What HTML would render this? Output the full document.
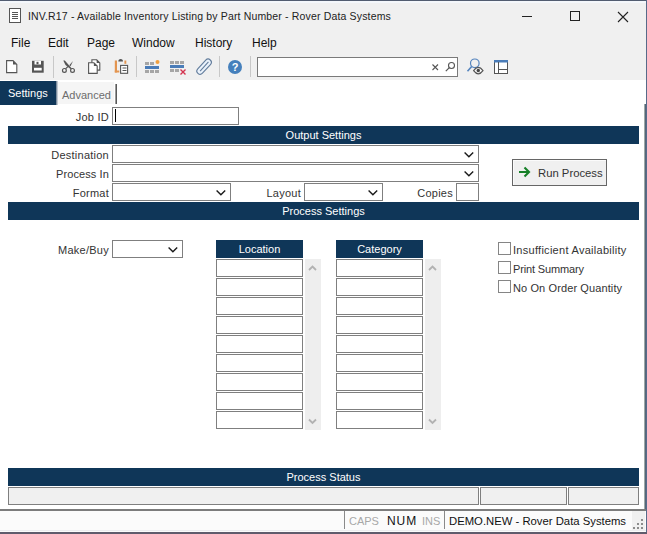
<!DOCTYPE html>
<html><head><meta charset="utf-8">
<style>
html,body{margin:0;padding:0;}
body{width:647px;height:534px;position:relative;overflow:hidden;background:#fff;font-family:"Liberation Sans",sans-serif;color:#333;}
.a{position:absolute;}
.t{position:absolute;white-space:nowrap;font-size:11px;line-height:13px;}
.r{text-align:right;letter-spacing:0.25px;}
.hdr{position:absolute;left:8px;width:631px;height:18px;background:#0f3658;color:#fff;text-align:center;font-size:11px;line-height:18px;}
.box{position:absolute;box-sizing:border-box;border:1px solid #7f7f7f;background:#fff;height:18px;}
.chev{position:absolute;}
.cell{position:absolute;box-sizing:border-box;border:1px solid #7f7f7f;background:#fff;width:87px;height:18px;}
.cb{position:absolute;box-sizing:border-box;width:13px;height:13px;border:1px solid #858585;background:#fff;}
.sb{position:absolute;box-sizing:border-box;border:1px solid #7f7f7f;background:#f0f0f0;height:18px;top:487px;}
</style></head><body>
<!-- chrome background -->
<div class="a" style="left:0;top:0;width:647px;height:80px;background:#f0f0f0;"></div>
<div class="a" style="left:0;top:1px;width:646px;height:2px;background:#f4f7fb;"></div><div class="a" style="left:0;top:0;width:647px;height:1px;background:#525c70;"></div>
<div class="a" style="left:646px;top:0;width:1px;height:534px;background:#576a89;"></div>

<!-- title -->
<svg class="a" style="left:9px;top:8px" width="13" height="15" viewBox="0 0 13 15">
<rect x="0.5" y="0.5" width="11" height="14" fill="#fff" stroke="#555"/>
<path d="M3 4.5h6M3 6.5h6M3 8.5h6M3 10.5h6" stroke="#555" stroke-width="1"/>
</svg>
<div class="t" style="left:28px;top:10px;font-size:10.5px;letter-spacing:0.16px;color:#222;">INV.R17 - Available Inventory Listing by Part Number - Rover Data Systems</div>
<div class="a" style="left:522px;top:16px;width:10px;height:1px;background:#222;"></div>
<div class="a" style="left:570px;top:11px;width:10px;height:10px;box-sizing:border-box;border:1px solid #222;"></div>
<svg class="a" style="left:617px;top:11px" width="12" height="12" viewBox="0 0 12 12"><path d="M1 1L11 11M11 1L1 11" stroke="#222" stroke-width="1.1"/></svg>

<!-- menu -->
<div class="t" style="left:11px;top:37px;font-size:12px;color:#111;">File</div>
<div class="t" style="left:48px;top:37px;font-size:12px;color:#111;">Edit</div>
<div class="t" style="left:87px;top:37px;font-size:12px;color:#111;">Page</div>
<div class="t" style="left:132px;top:37px;font-size:12px;color:#111;">Window</div>
<div class="t" style="left:195px;top:37px;font-size:12px;color:#111;">History</div>
<div class="t" style="left:252px;top:37px;font-size:12px;color:#111;">Help</div>

<!-- toolbar -->
<svg class="a" style="left:0;top:54px" width="520" height="26" viewBox="0 54 520 26">
<!-- new -->
<path d="M6.6 60.6h6.4l3.8 3.8v8.2h-10.2z" fill="#fff" stroke="#555" stroke-width="1.1"/>
<path d="M13 60.6l3.8 3.8h-3.8z" fill="#555"/>
<!-- save -->
<path d="M32 60.8h11.7v11.9h-11.7z" fill="#555"/>
<rect x="34.5" y="60.8" width="6.5" height="3.7" fill="#fff"/>
<rect x="36.5" y="61.8" width="2" height="2.4" fill="#555"/>
<rect x="34" y="67.8" width="7.7" height="2.7" fill="#fff"/>
<!-- sep -->
<rect x="53" y="56" width="1" height="22" fill="#c8c8c8"/>
<!-- cut -->
<circle cx="64.4" cy="70.4" r="1.9" fill="none" stroke="#555" stroke-width="1.2"/>
<circle cx="72.5" cy="70.4" r="1.9" fill="none" stroke="#555" stroke-width="1.2"/>
<path d="M63.3 60.6L64.8 60.4L71.8 68.6L70.8 69.2L65.5 65z" fill="#555"/>
<path d="M73 61L70.5 66.2L69.3 65.2z" fill="#555"/>
<path d="M65.5 68.8L68 66.5" stroke="#555" stroke-width="1.1"/>
<!-- copy -->
<path d="M91.9 59.8h4.8l3.1 3.1v7.2h-7.9z" fill="#fff" stroke="#555" stroke-width="1.1"/>
<path d="M96.7 59.8l3.1 3.1h-3.1z" fill="#555"/>
<path d="M88.6 62.8h5.3l3.3 3.3v7.3h-8.6z" fill="#fff" stroke="#555" stroke-width="1.1"/>
<path d="M93.9 62.8l3.3 3.3h-3.3z" fill="#555"/>
<!-- paste -->
<rect x="114.8" y="60.5" width="2.2" height="12" fill="#e39550"/>
<rect x="114.8" y="70.5" width="4.5" height="2" fill="#e39550"/>
<rect x="124.4" y="60.5" width="1.9" height="3.3" fill="#e39550"/>
<path d="M118.3 61.6q0-2.6 2.35-2.6q2.35 0 2.35 2.6z" fill="#555"/>
<rect x="120.6" y="65.4" width="7" height="7.9" fill="#fff" stroke="#555" stroke-width="1.1"/>
<path d="M122.5 68h4M122.5 70.5h4" stroke="#555" stroke-width="1"/>
<!-- sep -->
<rect x="136" y="56" width="1" height="21" fill="#c8c8c8"/>
<!-- insert row -->
<rect x="145" y="62" width="4" height="3" fill="#a6a6a6"/>
<rect x="150" y="62" width="4" height="3" fill="#a6a6a6"/>
<circle cx="157.5" cy="62" r="2" fill="#f0a040"/>
<rect x="145" y="66" width="14" height="3" fill="#4a7cb8"/>
<rect x="145" y="70" width="4" height="3" fill="#a6a6a6"/>
<rect x="150" y="70" width="4" height="3" fill="#a6a6a6"/>
<rect x="155" y="70" width="4" height="3" fill="#a6a6a6"/>
<!-- delete row -->
<rect x="170" y="61" width="4" height="3" fill="#a6a6a6"/>
<rect x="175" y="61" width="4" height="3" fill="#a6a6a6"/>
<rect x="180" y="61" width="4" height="3" fill="#a6a6a6"/>
<rect x="170" y="65" width="14" height="3" fill="#4a7cb8"/>
<rect x="170" y="69" width="4" height="3" fill="#a6a6a6"/>
<rect x="175" y="69" width="4" height="3" fill="#a6a6a6"/>
<path d="M180.5 69.5l5 5M185.5 69.5l-5 5" stroke="#d3324e" stroke-width="1.4"/>
<!-- paperclip -->
<g transform="rotate(-47.4 204.1 66.7)">
<rect x="195" y="63.5" width="18.2" height="6.4" rx="3.2" fill="#eaf2fb" stroke="#637d9c" stroke-width="1.15"/>
<path d="M198.2 66.7h12.3" stroke="#637d9c" stroke-width="1.1"/>
</g>
<!-- sep -->
<rect x="219" y="56" width="1" height="21" fill="#c8c8c8"/>
<!-- help -->
<circle cx="235" cy="67" r="7" fill="#4580bc"/>
<text x="235" y="71" font-family="Liberation Sans" font-weight="bold" font-size="11" fill="#fff" text-anchor="middle">?</text>
<!-- sep -->
<rect x="250" y="56" width="1" height="21" fill="#c8c8c8"/>
<!-- search box -->
<rect x="257.5" y="57.5" width="200" height="19" fill="#fff" stroke="#7a7a7a"/>
<path d="M432.5 64.5l5.5 5.5M438 64.5l-5.5 5.5" stroke="#555" stroke-width="1.1"/>
<circle cx="451.5" cy="65.5" r="3" fill="none" stroke="#555" stroke-width="1.1"/>
<path d="M449.3 67.7l-3.5 3.5" stroke="#555" stroke-width="1.2"/>
<!-- search eye -->
<circle cx="474.8" cy="63.3" r="4.3" fill="none" stroke="#5484be" stroke-width="1.2"/>
<path d="M471.7 66.5l-4.2 4.7" stroke="#5484be" stroke-width="1.6"/>
<path d="M473.6 70.6q4.7-6.4 9.4 0q-4.7 6.4-9.4 0z" fill="#f8f8f8" stroke="#555" stroke-width="1.15"/>
<circle cx="478.3" cy="70.5" r="1.7" fill="#444"/>
<!-- layout -->
<rect x="494.5" y="60.5" width="13" height="13" fill="#fff" stroke="#555"/>
<rect x="494" y="60" width="14" height="2.5" fill="#4a7cb8"/>
<path d="M498.5 62v11.5M498.5 69.5h9" stroke="#555"/>
</svg>

<!-- tabs -->
<div class="a" style="left:0;top:81px;width:56px;height:24px;background:#0f3658;"></div>
<div class="a" style="left:56px;top:81px;width:1px;height:24px;background:#7f8e9e;"></div><div class="a" style="left:57px;top:81px;width:1px;height:24px;background:#c0c8d0;"></div>
<div class="t" style="left:8px;top:87px;color:#fff;font-size:11px;">Settings</div>
<div class="a" style="left:58px;top:82px;width:56px;height:22px;background:#f5f5f5;"></div>
<div class="a" style="left:115px;top:84px;width:1px;height:20px;background:#9a9a9a;"></div><div class="a" style="left:116px;top:84px;width:1px;height:20px;background:#5a5a5a;"></div>
<div class="t" style="left:62px;top:89px;color:#6d6d6d;font-size:11px;">Advanced</div>

<!-- job id -->
<div class="t r" style="left:60px;width:49px;top:111px;">Job ID</div>
<div class="box" style="left:112px;top:107px;width:127px;"></div>
<div class="a" style="left:115px;top:109px;width:1px;height:13px;background:#000;"></div>

<div class="hdr" style="top:126px;">Output Settings</div>

<div class="t r" style="left:20px;width:89px;top:149px;">Destination</div>
<div class="box" style="left:112px;top:145px;width:367px;"></div>
<div class="t r" style="left:20px;width:89px;top:168px;letter-spacing:0.1px;">Process In</div>
<div class="box" style="left:112px;top:164px;width:367px;"></div>
<div class="t r" style="left:20px;width:89px;top:187px;">Format</div>
<div class="box" style="left:112px;top:183px;width:119px;"></div>
<div class="t r" style="left:240px;width:61px;top:187px;">Layout</div>
<div class="box" style="left:304px;top:183px;width:79px;"></div>
<div class="t r" style="left:390px;width:63px;top:187px;">Copies</div>
<div class="box" style="left:456px;top:183px;width:23px;"></div>

<svg class="chev" style="left:464px;top:151px" width="10" height="7"><path d="M0.6 1.5l4.3 4.3 4.3-4.3" fill="none" stroke="#1a1a1a" stroke-width="1.4"/></svg>
<svg class="chev" style="left:464px;top:170px" width="10" height="7"><path d="M0.6 1.5l4.3 4.3 4.3-4.3" fill="none" stroke="#1a1a1a" stroke-width="1.4"/></svg>
<svg class="chev" style="left:216px;top:189px" width="10" height="7"><path d="M0.6 1.5l4.3 4.3 4.3-4.3" fill="none" stroke="#1a1a1a" stroke-width="1.4"/></svg>
<svg class="chev" style="left:368px;top:189px" width="10" height="7"><path d="M0.6 1.5l4.3 4.3 4.3-4.3" fill="none" stroke="#1a1a1a" stroke-width="1.4"/></svg>

<!-- run process -->
<div class="a" style="left:512px;top:159px;width:95px;height:27px;box-sizing:border-box;border:1px solid #666;background:#f0f0f0;box-shadow:inset 1px 1px #fbfbfb;"></div>
<svg class="a" style="left:518px;top:166px" width="14" height="12"><path d="M1 6h10M6.5 1.5l4.5 4.5-4.5 4.5" fill="none" stroke="#178028" stroke-width="2.1"/></svg>
<div class="t" style="left:538px;top:167px;font-size:11.3px;color:#333;">Run Process</div>

<div class="hdr" style="top:202px;">Process Settings</div>

<!-- make/buy -->
<div class="t r" style="left:40px;width:69px;top:244px;">Make/Buy</div>
<div class="box" style="left:112px;top:240px;width:71px;"></div>
<svg class="chev" style="left:168px;top:246px" width="10" height="7"><path d="M0.6 1.5l4.3 4.3 4.3-4.3" fill="none" stroke="#1a1a1a" stroke-width="1.4"/></svg>

<!-- location grid -->
<div class="a" style="left:216px;top:240px;width:87px;height:18px;background:#0f3658;color:#fff;text-align:center;font-size:11px;line-height:18px;">Location</div>
<div class="a" style="left:305px;top:259px;width:16px;height:171px;background:#eeeeee;"></div>
<svg class="a" style="left:308px;top:264px" width="9" height="7"><path d="M1 6l3.5-3.5 3.5 3.5" fill="none" stroke="#b2b2b2" stroke-width="1.8"/></svg>
<svg class="a" style="left:308px;top:417.5px" width="9" height="7"><path d="M1 1.5l3.5 3.5 3.5-3.5" fill="none" stroke="#b2b2b2" stroke-width="1.8"/></svg>
<div class="cell" style="left:216px;top:259px;"></div>
<div class="cell" style="left:216px;top:278px;"></div>
<div class="cell" style="left:216px;top:297px;"></div>
<div class="cell" style="left:216px;top:316px;"></div>
<div class="cell" style="left:216px;top:335px;"></div>
<div class="cell" style="left:216px;top:354px;"></div>
<div class="cell" style="left:216px;top:373px;"></div>
<div class="cell" style="left:216px;top:392px;"></div>
<div class="cell" style="left:216px;top:411px;"></div>

<!-- category grid -->
<div class="a" style="left:336px;top:240px;width:87px;height:18px;background:#0f3658;color:#fff;text-align:center;font-size:11px;line-height:18px;">Category</div>
<div class="a" style="left:425px;top:259px;width:16px;height:171px;background:#eeeeee;"></div>
<svg class="a" style="left:428px;top:264px" width="9" height="7"><path d="M1 6l3.5-3.5 3.5 3.5" fill="none" stroke="#b2b2b2" stroke-width="1.8"/></svg>
<svg class="a" style="left:428px;top:417.5px" width="9" height="7"><path d="M1 1.5l3.5 3.5 3.5-3.5" fill="none" stroke="#b2b2b2" stroke-width="1.8"/></svg>
<div class="cell" style="left:336px;top:259px;"></div>
<div class="cell" style="left:336px;top:278px;"></div>
<div class="cell" style="left:336px;top:297px;"></div>
<div class="cell" style="left:336px;top:316px;"></div>
<div class="cell" style="left:336px;top:335px;"></div>
<div class="cell" style="left:336px;top:354px;"></div>
<div class="cell" style="left:336px;top:373px;"></div>
<div class="cell" style="left:336px;top:392px;"></div>
<div class="cell" style="left:336px;top:411px;"></div>

<!-- checkboxes -->
<div class="cb" style="left:498px;top:242px;"></div>
<div class="t" style="left:513px;top:244px;letter-spacing:0.28px;">Insufficient Availability</div>
<div class="cb" style="left:498px;top:261px;"></div>
<div class="t" style="left:513px;top:263px;letter-spacing:-0.15px;">Print Summary</div>
<div class="cb" style="left:498px;top:280px;"></div>
<div class="t" style="left:513px;top:282px;letter-spacing:0.11px;">No On Order Quantity</div>

<!-- process status -->
<div class="hdr" style="top:468px;">Process Status</div>
<div class="sb" style="left:8px;width:471px;"></div>
<div class="sb" style="left:480px;width:87px;"></div>
<div class="sb" style="left:568px;width:71px;"></div>

<!-- right inner edge -->
<div class="a" style="left:644px;top:104px;width:1px;height:406px;background:#9ea8a8;"></div><div class="a" style="left:645px;top:104px;width:1px;height:406px;background:#55677a;"></div>

<!-- status bar -->
<div class="a" style="left:0;top:509px;width:646px;height:2px;background:#7c7c7c;"></div>
<div class="a" style="left:0;top:511px;width:646px;height:21px;background:#fbfbfb;"></div>
<div class="a" style="left:344px;top:511px;width:1px;height:18px;background:#8a8a8a;"></div>
<div class="a" style="left:444px;top:511px;width:1px;height:18px;background:#8a8a8a;"></div>
<div class="t" style="left:349px;top:515px;font-size:11px;color:#a8a8a8;">CAPS</div>
<div class="t" style="left:387px;top:515px;font-size:12px;letter-spacing:0.9px;color:#111;">NUM</div>
<div class="t" style="left:422px;top:515px;font-size:11px;color:#a8a8a8;">INS</div>
<div class="t" style="left:449px;top:515px;font-size:11.3px;color:#111;">DEMO.NEW - Rover Data Systems</div>
<div class="a" style="left:632px;top:511px;width:13px;height:20px;background:#f0f0f0;"></div><svg class="a" style="left:630px;top:516px" width="14" height="14"><g fill="#8c8c8c"><rect x="11" y="3" width="2" height="2"/><rect x="7" y="7" width="2" height="2"/><rect x="11" y="7" width="2" height="2"/><rect x="3" y="11" width="2" height="2"/><rect x="7" y="11" width="2" height="2"/><rect x="11" y="11" width="2" height="2"/></g></svg>
<div class="a" style="left:0;top:530px;width:646px;height:1px;background:#ececef;"></div><div class="a" style="left:0;top:532px;width:647px;height:2px;background:#5f5b6c;"></div>
</body></html>
